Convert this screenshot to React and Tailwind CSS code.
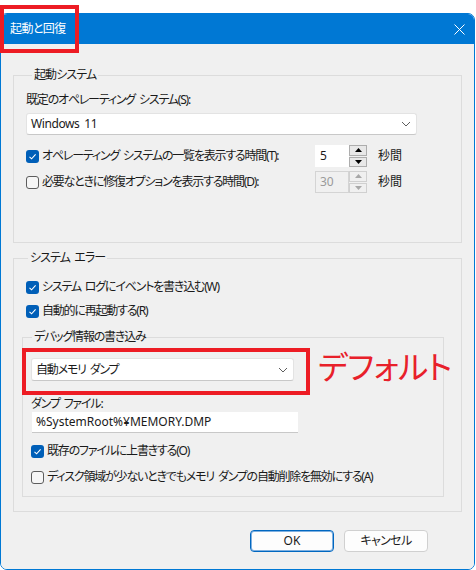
import React from "react";

const FONT = "font-['Noto_Sans','Noto_Sans_CJK_JP',sans-serif] [font-feature-settings:'palt']";

function CheckBox({ checked }) {
  if (checked) {
    return (
      <span className="flex h-[13px] w-[13px] shrink-0 items-center justify-center rounded-[3px] bg-[#005fb8]">
        <svg width="9" height="9" viewBox="0 0 9 9">
          <polyline points="1.5,4.8 3.6,6.8 7.6,2.4" fill="none" stroke="white" strokeWidth="1.1" />
        </svg>
      </span>
    );
  }
  return <span className="block h-[13px] w-[13px] shrink-0 rounded-[3px] border border-[#5d5d5d] bg-[#f6f6f6]" />;
}

function CheckRow({ checked, label, className = "" }) {
  return (
    <div className={`flex h-[16px] items-center ${className}`}>
      <CheckBox checked={checked} />
      <span className="ml-[3px] whitespace-nowrap leading-[16px]">{label}</span>
    </div>
  );
}

function Chevron() {
  return (
    <svg width="10" height="6" viewBox="0 0 10 6">
      <polyline points="1,1 5,5 9,1" fill="none" stroke="#5f5f5f" strokeWidth="1" />
    </svg>
  );
}

function Select({ value, className = "", textClass = "" }) {
  return (
    <div className={`flex items-center justify-between rounded-[3px] border border-[#e3e3e3] border-b-[#c8c8c8] bg-white pl-[4px] pr-[5px] ${className}`}>
      <span className={`leading-[16px] ${textClass}`}>{value}</span>
      <Chevron />
    </div>
  );
}

function Arrow({ up, disabled }) {
  const c = disabled ? "#a8a8a8" : "#000";
  return (
    <svg width="7" height="4" viewBox="0 0 7 4">
      {up ? <polygon points="0,4 7,4 3.5,0" fill={c} /> : <polygon points="0,0 7,0 3.5,4" fill={c} />}
    </svg>
  );
}

function Spinner({ value, disabled }) {
  const btn = disabled ? "border-[#d0d0d0] bg-[#f0f0f0]" : "border-[#adadad] bg-[#e8e8e8]";
  return (
    <div className="flex h-[22px]">
      <div
        className={
          disabled
            ? "flex w-[34px] items-center border border-[#d4d4d4] bg-[#f0f0f0] pl-[4px] text-[#9a9a9a] tracking-normal"
            : "flex w-[34px] items-center bg-white pl-[5px] tracking-normal"
        }
      >
        {value}
      </div>
      <div className="flex w-[18px] flex-col gap-[1px]">
        <div className={`flex flex-1 items-center justify-center border ${btn}`}>
          <Arrow up disabled={disabled} />
        </div>
        <div className={`flex flex-1 items-center justify-center border ${btn}`}>
          <Arrow disabled={disabled} />
        </div>
      </div>
    </div>
  );
}

function Legend({ children, className = "" }) {
  return (
    <span className={`-mt-[9px] block w-fit bg-[#f0f0f0] px-[2px] leading-[16px] ${className}`}>{children}</span>
  );
}

export default function App() {
  return (
    <div className={`relative h-[570px] w-[476px] overflow-hidden bg-white pt-[13px] text-[12px] tracking-[-1.2px] [word-spacing:2px] text-[#1a1a1a] ${FONT}`}>
      <div className="flex h-[557px] w-[475px] flex-col overflow-hidden rounded-[7px] border border-[#0078d4]">
        {/* title bar */}
        <div className="flex h-[30px] shrink-0 items-center justify-between bg-[#0078d4] pl-[9px] pr-[9px] text-white">
          <span className="leading-[16px] tracking-[-0.6px]">起動と回復</span>
          <svg width="11" height="11" viewBox="0 0 11 11">
            <path d="M0.5 0.5 L10.5 10.5 M10.5 0.5 L0.5 10.5" stroke="white" strokeWidth="1" />
          </svg>
        </div>

        <div className="flex-1 bg-[#f0f0f0] px-[12px] pt-[31px]">
          {/* 起動システム */}
          <div className="border border-[#dcdcdc] pb-[49px] pl-[12px]">
            <Legend className="ml-[6px] tracking-[-0.9px]">起動システム</Legend>
            <div className="mt-[9px] leading-[16px]">既定のオペレーティング システム(S):</div>
            <Select value="Windows 11" textClass="tracking-[-0.4px]" className="mt-[5px] h-[22px] w-[391px]" />
            <div className="mt-[10px] flex h-[22px] items-center">
              <CheckRow checked label="オペレーティング システムの一覧を表示する時間(T):" className="w-[289px]" />
              <Spinner value="5" />
              <span className="ml-[11px] leading-[16px] tracking-normal">秒間</span>
            </div>
            <div className="mt-[4px] flex h-[22px] items-center">
              <CheckRow label="必要なときに修復オプションを表示する時間(D):" className="w-[289px]" />
              <Spinner value="30" disabled />
              <span className="ml-[11px] leading-[16px] tracking-normal">秒間</span>
            </div>
          </div>

          {/* システム エラー */}
          <div className="mt-[15px] border border-[#dcdcdc] pb-[14px] pl-[8px] pr-[17px]">
            <Legend className="ml-[6px] tracking-[-0.9px]">システム エラー</Legend>
            <CheckRow checked label="システム ログにイベントを書き込む(W)" className="mt-[13px] pl-[4px]" />
            <CheckRow checked label="自動的に再起動する(R)" className="mt-[8px] pl-[4px]" />

            <div className="mt-[18px] border border-[#dcdcdc] pb-[11px] pl-[8px]">
              <Legend className="ml-[1px]">デバッグ情報の書き込み</Legend>
              <Select value="自動メモリ ダンプ" className="mt-[13px] h-[23px] w-[263px]" />
              <div className="mt-[15px] leading-[16px]">ダンプ ファイル:</div>
              <div className="ml-[1px] flex h-[21px] w-[266px] items-center border-b border-[#c8c8c8] bg-white pl-[4px] tracking-normal">
                %SystemRoot%¥MEMORY.DMP
              </div>
              <CheckRow checked label="既存のファイルに上書きする(O)" className="mt-[10px]" />
              <CheckRow label="ディスク領域が少ないときでもメモリ ダンプの自動削除を無効にする(A)" className="mt-[10px]" />
            </div>
          </div>

          {/* buttons */}
          <div className="mr-[34px] mt-[18px] flex justify-end gap-[10px]">
            <button className="flex h-[22px] w-[84px] items-center justify-center rounded-[4px] border border-[#0067c0] bg-[#fdfdfd] leading-[16px] tracking-normal shadow-[inset_0_0_0_1px_#7fb0e0]">
              OK
            </button>
            <button className="flex h-[22px] w-[84px] items-center justify-center rounded-[4px] border border-[#d0d0d0] bg-[#fdfdfd] leading-[16px] tracking-[-0.6px]">
              キャンセル
            </button>
          </div>
        </div>
      </div>

      {/* annotations */}
      <div className="absolute left-0 top-[5px] h-[48px] w-[79px] border-[4px] border-[#ed1c24]" />
      <div className="absolute left-[22px] top-[348px] h-[47px] w-[288px] border-[4px] border-[#ed1c24]" />
      <div className="absolute left-[318px] top-[347px] text-[32px] leading-[40px] tracking-[-0.5px] [word-spacing:0px] text-[#e8202a]">デフォルト</div>
    </div>
  );
}
